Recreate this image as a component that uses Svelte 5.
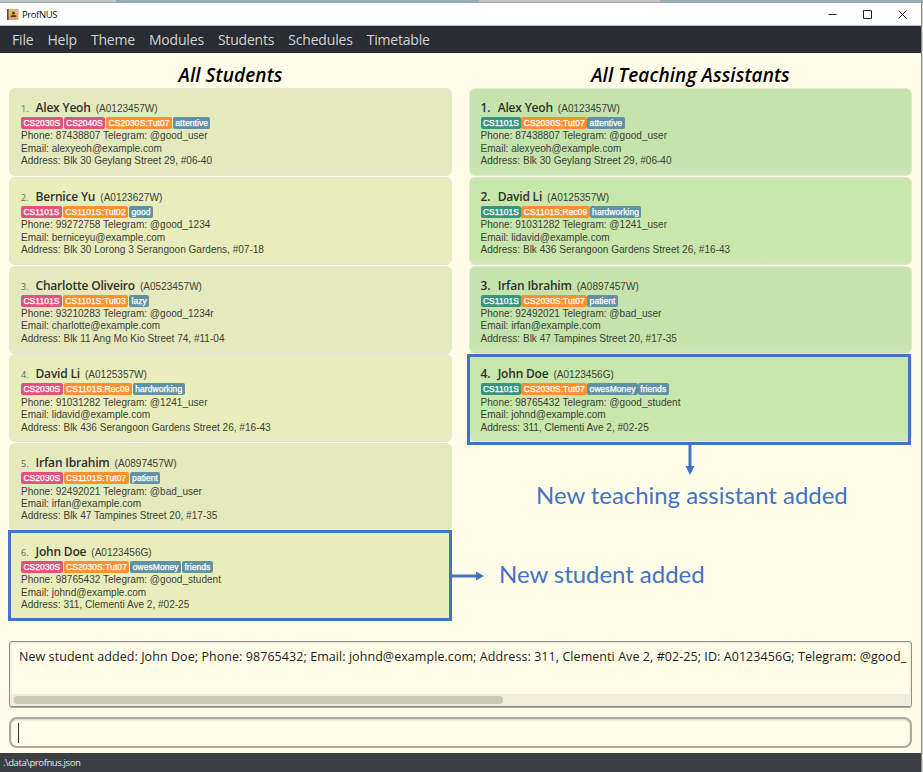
<script>
  const menus = ['File', 'Help', 'Theme', 'Modules', 'Students', 'Schedules', 'Timetable'];

  const alex = { name: 'Alex Yeoh', id: 'A0123457W', phone: '87438807', tg: '@good_user', email: 'alexyeoh@example.com', address: 'Blk 30 Geylang Street 29, #06-40' };
  const bernice = { name: 'Bernice Yu', id: 'A0123627W', phone: '99272758', tg: '@good_1234', email: 'berniceyu@example.com', address: 'Blk 30 Lorong 3 Serangoon Gardens, #07-18' };
  const charlotte = { name: 'Charlotte Oliveiro', id: 'A0523457W', phone: '93210283', tg: '@good_1234r', email: 'charlotte@example.com', address: 'Blk 11 Ang Mo Kio Street 74, #11-04' };
  const david = { name: 'David Li', id: 'A0125357W', phone: '91031282', tg: '@1241_user', email: 'lidavid@example.com', address: 'Blk 436 Serangoon Gardens Street 26, #16-43' };
  const irfan = { name: 'Irfan Ibrahim', id: 'A0897457W', phone: '92492021', tg: '@bad_user', email: 'irfan@example.com', address: 'Blk 47 Tampines Street 20, #17-35' };
  const john = { name: 'John Doe', id: 'A0123456G', phone: '98765432', tg: '@good_student', email: 'johnd@example.com', address: '311, Clementi Ave 2, #02-25' };

  const columns = [
    {
      title: 'All Students',
      kind: 'students',
      people: [
        { ...alex, modules: ['CS2030S', 'CS2040S'], classes: ['CS2030S:Tut07'], tags: ['attentive'] },
        { ...bernice, modules: ['CS1101S'], classes: ['CS1101S:Tut02'], tags: ['good'] },
        { ...charlotte, modules: ['CS1101S'], classes: ['CS1101S:Tut03'], tags: ['lazy'] },
        { ...david, modules: ['CS2030S'], classes: ['CS1101S:Rec09'], tags: ['hardworking'] },
        { ...irfan, modules: ['CS2030S'], classes: ['CS1101S:Tut07'], tags: ['patient'] },
        { ...john, modules: ['CS2030S'], classes: ['CS2030S:Tut07'], tags: ['owesMoney', 'friends'], added: true }
      ]
    },
    {
      title: 'All Teaching Assistants',
      kind: 'assistants',
      people: [
        { ...alex, modules: ['CS1101S'], classes: ['CS2030S:Tut07'], tags: ['attentive'] },
        { ...david, modules: ['CS1101S'], classes: ['CS1101S:Rec09'], tags: ['hardworking'] },
        { ...irfan, modules: ['CS1101S'], classes: ['CS2030S:Tut07'], tags: ['patient'] },
        { ...john, modules: ['CS1101S'], classes: ['CS2030S:Tut07'], tags: ['owesMoney', 'friends'], added: true }
      ]
    }
  ];
</script>

<div class="screen">
  <div class="backdrop"><i></i><b></b><i></i></div>
  <div class="window">
    <header class="titlebar">
      <svg class="logo" width="12" height="11" viewBox="0 0 12 11">
        <rect x="0" y="0" width="2" height="11" fill="#5b4c3c" />
        <rect x="1.5" y="0" width="10" height="11" rx="0.8" fill="#dcaa58" />
        <rect x="2" y="0.5" width="9" height="4" fill="#e5bb70" />
        <circle cx="6.5" cy="3.9" r="1.5" fill="#4e4031" />
        <path d="M3.6 8c0-1.5 1.7-2.2 2.9-2.2S9.4 6.500 9.400 8z" fill="#4e4031" />
      </svg>
      <span class="app-name">ProfNUS</span>
      <div class="controls">
        <svg width="9" height="9" viewBox="0 0 9 9"><path d="M.5 4.500H8.500" /></svg>
        <svg width="9" height="9" viewBox="0 0 9 9"><path d="M.5.5H8.500V8.500H.5z" /></svg>
        <svg width="9" height="9" viewBox="0 0 9 9"><path d="M.5.5L8.500 8.500M8.500.5L.5 8.500" /></svg>
      </div>
    </header>

    <nav>
      {#each menus as menu}<span>{menu}</span>{/each}
    </nav>

    <main>
      <div class="columns">
        {#each columns as column}
          <section class={column.kind}>
            <h2>{column.title}</h2>
            {#each column.people as p, i}
              <div class="slot">
                <article class:alt={i % 2 === 1}>
                  <div class="who">
                    <span class="index">{i + 1}.</span>
                    <span class="name">{p.name}</span>
                    <span class="id">({p.id})</span>
                  </div>
                  <div class="chips">
                    {#each p.modules as m}<span class="module">{m}</span>{/each}
                    {#each p.classes as c}<span class="class">{c}</span>{/each}
                    {#each p.tags as t}<span class="tag">{t}</span>{/each}
                  </div>
                  <p>Phone: {p.phone} Telegram: {p.tg}</p>
                  <p>Email: {p.email}</p>
                  <p>Address: {p.address}</p>
                </article>
                {#if p.added}
                  <div class="marker">
                    {#if column.kind === 'students'}
                      <svg class="arrow" width="33" height="10" viewBox="0 0 33 10"><path d="M0 3.500H25V.5L33 5L25 9.500V6.500H0z" /></svg>
                      <span class="note">New student added</span>
                    {:else}
                      <svg class="arrow" width="10" height="31" viewBox="0 0 10 31"><path d="M3.500 0V22H.5L5 31L9.500 22H6.500V0z" /></svg>
                      <span class="note">New teaching assistant added</span>
                    {/if}
                  </div>
                {/if}
              </div>
            {/each}
          </section>
        {/each}
      </div>

      <div class="result">
        <div class="message">New student added: John Doe; Phone: 98765432; Email: johnd@example.com; Address: 311, Clementi Ave 2, #02-25; ID: A0123456G; Telegram: @good_</div>
        <div class="track"><div class="thumb"></div></div>
      </div>
      <div class="command"><i></i></div>
    </main>

    <footer>.\data\profnus.json</footer>
  </div>
</div>

<style>
  :global(body) { margin: 0; overflow: hidden; }
  .screen {
    width: 923px;
    height: 772px;
    box-sizing: border-box;
    display: flex;
    flex-direction: column;
    background: #d4d4d0;
    font-family: "Open Sans", "Noto Sans", sans-serif;
    overflow: hidden;
  }
  .backdrop { height: 3px; flex: none; display: flex; background: #bfbfbc; border-bottom: 1px solid #9aa5a6; box-sizing: border-box; }
  .backdrop i { flex: 1; background: #93b0b4; }
  .backdrop i:first-child { flex: none; width: 479px; background: linear-gradient(90deg, #bcc9c6 0 116px, #91aeb3 116px); }
  .backdrop b { width: 181px; background: #c5c2bd; }
  .window {
    width: 921px;
    flex: 1;
    min-height: 0;
    display: flex;
    flex-direction: column;
    background: #fffde8;
    border-right: 1px solid #8b8b88;
  }
  .titlebar { height: 22px; flex: none; display: flex; align-items: center; background: #fff; border-bottom: 1px solid #b9babc; }
  .logo { margin-left: 7px; }
  .app-name { margin-left: 3px; font-size: 9.5px; letter-spacing: -0.4px; color: #111; }
  .controls { margin-left: auto; margin-right: 14px; display: flex; gap: 26px; }
  .controls svg { fill: none; stroke: #222; stroke-width: 1; }
  nav {
    height: 27px;
    flex: none;
    box-sizing: border-box;
    display: flex;
    align-items: center;
    gap: 14px;
    padding: 0 0 1px 12px;
    background: #292c33;
    color: #d2d4d6;
    font-size: 14px;
    letter-spacing: -0.19px;
  }
  main { flex: 1; min-height: 0; display: flex; flex-direction: column; padding: 0 9px; }
  .columns { height: 588px; flex: none; display: flex; gap: 17px; }
  section { width: 443px; flex: none; }
  h2 {
    margin: 0;
    height: 35px;
    padding-top: 9px;
    box-sizing: border-box;
    text-align: center;
    font-size: 19px;
    line-height: 26px;
    font-weight: 600;
    font-style: italic;
    color: #000;
    letter-spacing: 0.1px;
  }
  .slot { position: relative; height: 88.8px; }
  article {
    height: 88px;
    box-sizing: border-box;
    border: 1px solid #e4e6d0;
    border-radius: 6px;
    padding: 10px 0 0 11px;
    background: linear-gradient(#e4eabd 88%, #e5e9c5);
    color: #3c3d38;
    font: 10.050px/12.400px "Liberation Sans", Arial, sans-serif;
  }
  article.alt { background: linear-gradient(#e9edbb 88%, #e9ebc5); }
  .assistants article { padding-left: 10.500px; background: linear-gradient(#c5e4ad 88%, #cde5b9); }
  .assistants article.alt { background: linear-gradient(#c8e7ab 88%, #cde6b8); }
  .who { height: 18px; display: flex; align-items: baseline; line-height: 18px; white-space: nowrap; }
  .index { width: 14.500px; font: 9px/18px "Open Sans", sans-serif; color: #62645a; }
  .assistants .index { width: auto; margin-right: 7px; font-size: 12px; font-weight: 600; color: #2c2d2b; }
  .name { margin-right: 5px; font: 600 12px/18px "Open Sans", sans-serif; color: #2f302c; letter-spacing: -0.19px; }
  .chips { height: 12px; margin-bottom: 1.400px; display: flex; gap: 1px; }
  .assistants .chips { gap: 0; }
  .chips span {
    padding: 0 2.400px;
    border-radius: 2px;
    color: #fff;
    font-size: 8.500px;
    line-height: 12.500px;
    letter-spacing: 0.06px;
    -webkit-text-stroke: 0.25px #fff;
  }
  .chips .module { background: #e3527f; }
  .assistants .chips .module { background: #389480; }
  .chips .class { background: #fc8f30; }
  .chips .tag { background: #6092a5; }
  p { margin: 0; white-space: nowrap; }
  .marker { position: absolute; left: -1px; top: -1.500px; width: 444px; height: 91px; box-sizing: border-box; border: 3px solid #4472c4; }
  .assistants .marker { left: -2px; top: 0; }
  .arrow { position: absolute; fill: #4472c4; }
  .students .arrow { left: 440px; top: 37.500px; }
  .assistants .arrow { left: 215px; top: 87px; }
  .note { position: absolute; white-space: nowrap; color: #4472c4; font: 24px/30px Lato, sans-serif; letter-spacing: -0.05px; }
  .students .note { left: 488px; top: 26px; }
  .assistants .note { left: 66px; top: 123px; }
  .result {
    height: 66px;
    flex: none;
    box-sizing: border-box;
    display: flex;
    flex-direction: column;
    justify-content: space-between;
    border: 1px solid #8e8e86;
    border-radius: 3px;
    box-shadow: inset 0 0 3px #c9c8b5, 0 1px 0 #a9a89d;
    overflow: hidden;
  }
  .message { padding: 5px 0 0 9px; white-space: nowrap; font-size: 12.500px; line-height: 19px; letter-spacing: 0.065px; color: #1c1c1c; }
  .track { height: 12px; display: flex; align-items: center; padding-left: 4px; background: #f0eeda; }
  .thumb { width: 489px; height: 8px; border-radius: 3px; background: #c9c8b5; }
  .command {
    height: 31px;
    flex: none;
    margin-top: 10px;
    box-sizing: border-box;
    display: flex;
    align-items: center;
    padding-left: 7px;
    border: 2px solid #aaa99d;
    border-radius: 8px;
    box-shadow: inset 0 1px 2px #d5d4c2;
  }
  .command i { width: 1px; height: 20px; background: #333; }
  footer { height: 19px; flex: none; background: #3b3e45; color: #e8e8e8; font-size: 9.500px; line-height: 20px; padding-left: 3px; letter-spacing: -0.4px; }
</style>
